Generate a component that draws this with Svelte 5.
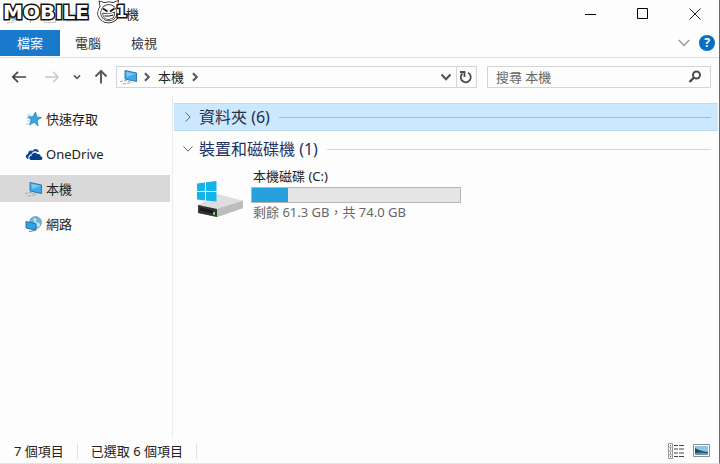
<script>
  const tabs = ['電腦', '檢視'];
  const places = [
    { icon: 'star', name: '快速存取' },
    { icon: 'cloud', name: 'OneDrive' },
    { icon: 'pc', name: '本機' },
    { icon: 'network', name: '網路' }
  ];
  const drive = { name: '本機磁碟 (C:)', free: 61.3, total: 74 };

  let current = $state('本機');
  let query = $state('');

  // Share of the drive that is already in use
  let used = $derived(((drive.total - drive.free) / drive.total) * 100);
</script>

{#snippet chevron(dir, size, width)}
  <svg class="chevron {dir}" width={size} height={size} viewBox="0 0 12 12" aria-hidden="true">
    <path d="M1.5 3.5 6 8.2l4.500-4.700" fill="none" stroke="currentColor" stroke-width={width} />
  </svg>
{/snippet}

{#snippet placeIcon(icon)}
  <svg width="18" height="16" viewBox="0 0 18 16" aria-hidden="true">
    {#if icon === 'star'}
      <path d="M2 4h4M1 7h3M2 10h4M1 13h3" stroke="#9bd0ee" />
      <path d="m10.500 1 1.300 5 4.700.6-4.300 2.600.9 5.800-4-3.700L4.500 14l1.700-5L3 5.800l4.800-.1z" fill="#38a4e0" stroke="#2080bd" stroke-width=".7" />
    {:else if icon === 'cloud'}
      <path d="M3.500 13C-.3 12.500.2 8.600 3 8 2.800 5 6 3.600 7.500 5 9 1.800 13.500 2.300 14 6l-2.500-.3C9 4.500 7 6.500 6.500 8.300 4 8.600 3 11 3.500 13z" fill="#0d4a9c" />
      <path d="M6.500 14c-3 0-2.800-4.400.3-4.600.2-3 4.400-3.600 5.400-1.200 2-.8 3.600.6 3.400 2.300 2.600.2 2.400 3.500 0 3.500z" fill="#0a3c8c" />
    {:else if icon === 'pc'}
      <path d="m5 1.500 11.500 2.500v8.500L5 10z" fill="#3fa9ec" stroke="#3278a8" />
      <path d="m6 2.700 9.500 2L7 8z" fill="#78c8f6" />
      <path d="m0 12.500 6-1 6 2.200M3 15l7-1" fill="none" stroke="#9aaab5" stroke-dasharray="3 1" />
    {:else}
      <circle cx="10.500" cy="6.500" r="6" fill="#6fb3d9" stroke="#4385ac" stroke-width=".6" />
      <path d="M8 3c3-2 4 0 3 2s3 1 4 3-1 3-3 3" fill="#c5e4f1" />
      <path d="m1 5.500 10 2.200v6.500L1 12z" fill="#32a0e7" stroke="#2474a8" />
      <path d="m4 15.500 6-1" stroke="#657f90" />
    {/if}
  </svg>
{/snippet}

<div class="window" lang="zh-TW">
  <header class="titlebar">
    <div class="quick" aria-hidden="true">
      {@render placeIcon('pc')}
      <span class="bar"></span>
      <svg width="14" height="14" viewBox="0 0 14 14"><path d="M1.500.5h11v13h-11z" fill="#fff" stroke="#c4b3a3" /><path d="M4 10h6" stroke="#d98f6a" /></svg>
      <svg width="14" height="14" viewBox="0 0 14 14"><path d="M1 1h5l1 2h6v10H1z" fill="#d8e6f5" /></svg>
    </div>
    <h1>機</h1>
    <div class="controls">
      <button aria-label="最小化">
        <svg width="12" height="12" viewBox="0 0 12 12"><path d="M0 6.500h11" stroke="#000" /></svg>
      </button>
      <button aria-label="最大化">
        <svg width="12" height="12" viewBox="0 0 12 12"><path d="M.5.5h10v10H.5z" fill="none" stroke="#000" /></svg>
      </button>
      <button aria-label="關閉">
        <svg width="12" height="12" viewBox="0 0 12 12"><path d="m.5.5 11 11m0-11-11 11" stroke="#222" /></svg>
      </button>
    </div>
    <div class="watermark">
      <span>MOBILE</span>
      <svg width="26" height="24" viewBox="0 0 26 24" aria-hidden="true">
        <path d="M4.500 6.500 3.500 1.500 8.500 3q4.500-1.500 8.500 0l5-2-.5 5q3 4 1.500 9-3 7-10 7.500T2.500 16Q1 11 4.500 6.500z" fill="#fff" stroke="#111" stroke-width="1.500" />
        <circle cx="12.800" cy="12.800" r="7.800" fill="#fff" stroke="#111" stroke-width="1.400" />
        <path d="m7 8.500 4.500 3M18.500 8.500l-4.500 3" stroke="#111" stroke-width="1.600" />
        <path d="M7 13.500q6 1 11.500-1 0 6-5.500 6.500T7 13.500z" fill="#fff" stroke="#111" stroke-width="1.300" />
        <path d="M8.500 16q5 .5 9-1" fill="none" stroke="#111" />
      </svg>
      <span class="one">1</span>
    </div>
  </header>

  <nav class="ribbon">
    <button class="file">檔案</button>
    {#each tabs as tab}
      <button class="tab">{tab}</button>
    {/each}
    <button class="expand" aria-label="展開功能區">{@render chevron('down', 14, 1.2)}</button>
    <button class="help" aria-label="說明">?</button>
  </nav>

  <div class="toolbar">
    <div class="history">
      <button aria-label="上一頁">
        <svg width="16" height="14" viewBox="0 0 16 14"><path d="M15 7H2m5-5.200L1.800 7 7 12.200" fill="none" stroke="#444" stroke-width="1.700" /></svg>
      </button>
      <button aria-label="下一頁" disabled>
        <svg width="16" height="14" viewBox="0 0 16 14"><path d="M1 7h13M9 1.800 14.200 7 9 12.200" fill="none" stroke="#c8c8c8" stroke-width="1.500" /></svg>
      </button>
      <button class="recent" aria-label="最近的位置">{@render chevron('down', 8, 2.4)}</button>
      <button aria-label="上一層">
        <svg width="14" height="16" viewBox="0 0 14 16"><path d="M7 14.500V2M1.500 7.500 7 2l5.500 5.500" fill="none" stroke="#5a5a5a" stroke-width="2" /></svg>
      </button>
    </div>
    <div class="address">
      {@render placeIcon('pc')}
      {@render chevron('right', 10, 2.4)}
      <a href="#pc">本機</a>
      {@render chevron('right', 10, 2.4)}
      <button class="drop" aria-label="先前的位置">{@render chevron('down', 12, 2.2)}</button>
      <button class="refresh" aria-label="重新整理">
        <svg width="14" height="14" viewBox="0 0 14 14"><path d="M9 2.800A5 5 0 1 1 3.500 3.500" fill="none" stroke="#4c4c4c" stroke-width="1.800" /><path d="M1 2h4.500v5" fill="none" stroke="#4c4c4c" stroke-width="1.800" /></svg>
      </button>
    </div>
    <div class="search">
      <input type="text" aria-label="搜尋 本機" placeholder="搜尋 本機" bind:value={query} />
      <svg width="14" height="14" viewBox="0 0 14 14" aria-hidden="true"><circle cx="8.500" cy="5" r="3.500" fill="none" stroke="#4c4c4c" stroke-width="2" /><path d="M6 7.500 1.500 12" stroke="#4c4c4c" stroke-width="2.400" /></svg>
    </div>
  </div>

  <div class="body">
    <nav class="places">
      {#each places as place}
        <button class="place" class:active={place.name === current} onclick={() => (current = place.name)}>
          {@render placeIcon(place.icon)}
          {place.name}
        </button>
      {/each}
    </nav>

    <main>
      <h2 class="group selected">
        {@render chevron('right', 12, 1)}
        資料夾 (6)
      </h2>
      <h2 class="group">
        {@render chevron('down', 12, 1)}
        裝置和磁碟機 (1)
      </h2>
      <div class="drive">
        <svg width="48" height="38" viewBox="0 0 48 38" aria-hidden="true">
          <path d="m1 25 20-11 25 6v7L20 36 1 32z" fill="#b9b9bb" />
          <path d="m1 24 20-11 25 7-26 8z" fill="#dedee0" />
          <path d="M20 28 46 20v7l-26 9z" fill="#bdbdc0" />
          <path d="m1 24 19 4v8L1 32z" fill="#333436" />
          <path d="m3 26.500 13 3v3l-13-3z" fill="#1b1b1d" />
          <path d="M16 31h2v3h-2z" fill="#5fe04b" />
          <path d="m0 2.500 8-1V10H0zM9 1.300 19.500 0v10H9zM0 11h8v8.500l-8-1zM9 11h10.500v9.500L9 19.500z" fill="#12b5ea" />
        </svg>
        <div class="info">
          <div class="name">{drive.name}</div>
          <div class="usage" role="progressbar" aria-label={drive.name} aria-valuenow={Math.round(used)}>
            <div class="fill" style="width: {used}%"></div>
          </div>
          <div class="detail">剩餘 {drive.free.toFixed(1)} GB，共 {drive.total.toFixed(1)} GB</div>
        </div>
      </div>
    </main>
  </div>

  <footer>
    <span>7 個項目</span>
    <span>已選取 6 個項目</span>
    <div class="views">
      <button aria-label="詳細資料">
        <svg width="17" height="16" viewBox="0 0 17 16">
          <path d="M.5.500h4v15h-4zM.5 4.200h4M.5 8h4M.5 11.800h4" fill="#fff" stroke="#999" />
          <path d="M2 2.500h1M2 6h1M2 10h1M2 13.500h1" stroke="#333" />
          <path d="M6 2.500h4m1 0h5M6 6h4m1 0h5M6 10h4m1 0h5M6 13.500h4m1 0h5" stroke="#444" />
        </svg>
      </button>
      <button aria-label="大圖示">
        <svg width="17" height="13" viewBox="0 0 17 13">
          <path d="M.5.500h16v12H.5z" fill="#fff" stroke="#8a8f92" />
          <path d="M2 2h13v9H2z" fill="#8fc4e8" />
          <path d="M2 4q5 3 13 4v3H2z" fill="#1f4d60" />
          <path d="M2 9q6-1 13 0v2H2z" fill="#5d97b2" />
        </svg>
      </button>
    </div>
  </footer>
</div>

<style>
  :global(body) {
    margin: 0;
  }

  .window {
    display: flex;
    flex-direction: column;
    box-sizing: border-box;
    min-height: 100vh;
    border-right: 1px solid #3f7888;
    border-bottom: 1px solid #c9eff5;
    background: #fdfdfd;
    color: #222;
    font: 13px/20px "Noto Sans", "Noto Sans CJK TC", sans-serif;
  }

  button {
    display: flex;
    align-items: center;
    justify-content: center;
    padding: 0;
    border: 0;
    background: none;
    color: inherit;
    font: inherit;
  }

  svg {
    display: block;
    flex: none;
  }

  .chevron.right {
    transform: rotate(-90deg);
  }

  .titlebar {
    position: relative;
    display: flex;
    align-items: center;
    height: 27px;
    padding: 0 12px 2px 4px;
  }

  .quick {
    display: flex;
    align-items: center;
    gap: 8px;
    width: 122px;
    padding-top: 4px;
    opacity: 0.7;
  }

  .bar {
    width: 1px;
    height: 14px;
    margin-right: 4px;
    background: #999;
  }

  h1 {
    margin: 0;
    font-size: 13px;
    font-weight: 400;
  }

  .controls {
    display: flex;
    gap: 28px;
    margin-left: auto;
  }

  .controls button {
    width: 24px;
    height: 24px;
  }

  .watermark {
    position: absolute;
    top: 0;
    left: 3px;
    display: flex;
    align-items: center;
    height: 24px;
    color: #fff;
    font: bold 20px/24px "DejaVu Sans", sans-serif;
    -webkit-text-stroke: 3px #111;
    paint-order: stroke fill;
  }

  .watermark svg {
    margin-left: 7px;
  }

  .watermark .one {
    margin-left: -6px;
    font-size: 16px;
  }

  .ribbon {
    display: flex;
    align-items: center;
    padding: 1px 4px 1px 0;
    border-bottom: 1px solid #dedede;
  }

  .file {
    width: 60px;
    height: 26px;
    background: #1979ca;
    color: #fff;
  }

  .tab {
    width: 56px;
    height: 26px;
    color: #333;
  }

  .expand {
    margin-left: auto;
    color: #999;
  }

  .help {
    width: 16px;
    height: 16px;
    margin-left: 8px;
    border-radius: 50%;
    background: #0a6dc6;
    color: #fff;
    font-size: 12px;
    font-weight: 700;
    line-height: 16px;
  }

  .toolbar {
    display: flex;
    align-items: center;
    padding: 8px 8px 8px 11px;
  }

  .history {
    display: flex;
    align-items: center;
    gap: 17px;
    width: 105px;
    color: #555;
  }

  .history .recent {
    margin: 0 -4px;
  }

  .address,
  .search {
    display: flex;
    align-items: center;
    box-sizing: border-box;
    height: 22px;
    border: 1px solid #d5d5d5;
  }

  .address {
    flex: 19;
    gap: 4px;
    padding-left: 3px;
    color: #555;
  }

  .address a {
    margin: 0 2px;
    color: #222;
    text-decoration: none;
  }

  .drop {
    margin-left: auto;
  }

  .refresh {
    width: 20px;
    height: 20px;
    border-left: 1px solid #d5d5d5;
  }

  .search {
    flex: 11;
    margin-left: 10px;
    padding: 0 8px;
  }

  .search input {
    flex: 1;
    min-width: 0;
    padding: 0;
    border: 0;
    outline: 0;
    background: none;
    color: #222;
    font: inherit;
  }

  .search input::placeholder {
    color: #666;
  }

  .body {
    display: flex;
    flex: 1;
  }

  .places {
    display: flex;
    flex-direction: column;
    gap: 8px;
    width: 172px;
    padding-top: 9px;
    border-right: 1px solid #ececec;
  }

  .place {
    justify-content: flex-start;
    gap: 3px;
    width: 170px;
    height: 27px;
    padding-left: 25px;
  }

  .place.active {
    background: #d9d9d9;
  }

  main {
    flex: 1;
    padding: 7px 1px 0 1px;
  }

  .group {
    display: flex;
    align-items: center;
    gap: 5px;
    box-sizing: border-box;
    height: 28px;
    margin: 0 0 4px;
    padding: 0 7px 0 8px;
    color: #1e3266;
    font-size: 16px;
    font-weight: 400;
    line-height: 24px;
  }

  .group .chevron {
    color: #666;
  }

  .group::after {
    flex: 1;
    height: 1px;
    margin-left: 4px;
    background: #d6d6d6;
    content: "";
  }

  .group.selected {
    border: solid #b9dcf0;
    border-width: 1px 0;
    background: #cce8ff;
    color: #222f4c;
  }

  .group.selected::after {
    background: #9fbdd6;
  }

  .drive {
    display: flex;
    gap: 6px;
    padding: 0 23px;
  }

  .drive svg {
    margin-top: 14px;
  }

  .usage {
    box-sizing: border-box;
    width: 210px;
    height: 16px;
    margin-top: 2px;
    border: 1px solid #b5b5b5;
    background: #e5e5e5;
  }

  .name,
  .detail {
    padding-left: 2px;
    line-height: 18px;
  }

  .fill {
    height: 100%;
    background: #26a0da;
  }

  .detail {
    color: #666;
  }

  footer {
    display: flex;
    align-items: center;
    height: 25px;
    padding: 0 9px 0 14px;
  }

  footer span {
    margin-right: 13px;
    padding-right: 13px;
    border-right: 1px solid #e4e4e4;
    line-height: 16px;
  }

  .views {
    display: flex;
    gap: 8px;
    margin-left: auto;
  }
</style>
